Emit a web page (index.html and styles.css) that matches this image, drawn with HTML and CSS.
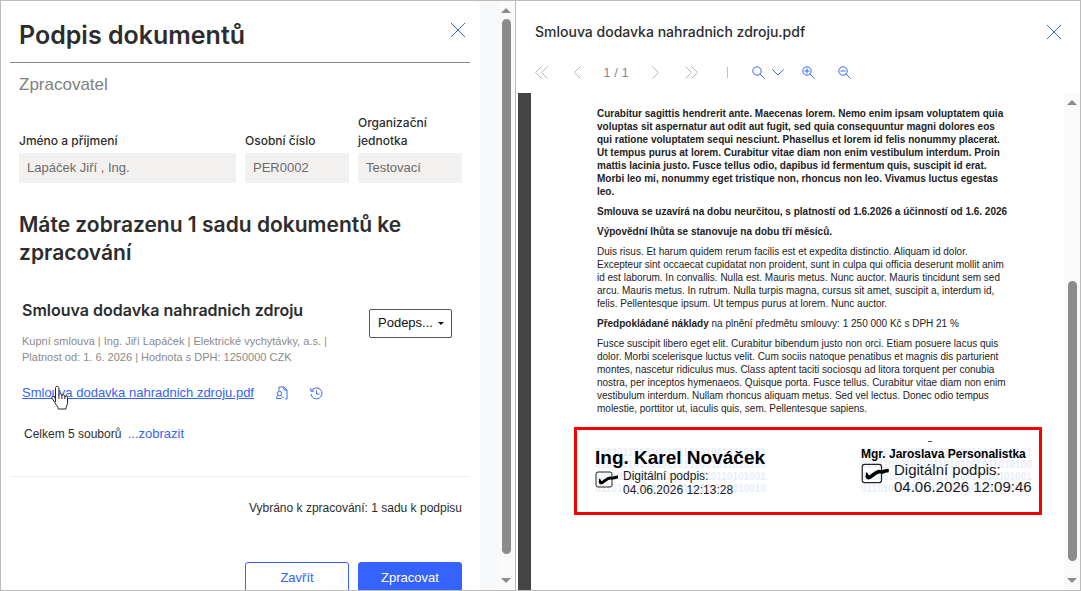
FILE: index.html
```html
<!DOCTYPE html>
<html lang="cs">
<head>
  <meta charset="UTF-8">
  <meta name="viewport" content="width=device-width, initial-scale=1.0">
  <title>Podpis dokumentů</title>
  <link rel="stylesheet" href="styles.css">
</head>
<body>
  <main class="app">
    <section class="left-pane">
      <div class="panel">
        <header class="panel-header">
          <h1>Podpis dokumentů</h1>
          <button class="close-btn" type="button" aria-label="Zavřít panel">
            <svg width="16" height="16" viewBox="0 0 16 16"><path d="M1 1l14 14M15 1L1 15"/></svg>
          </button>
        </header>

        <form class="panel-body">
          <p class="role">Zpracovatel</p>
          <div class="fields">
            <div class="field">
              <label for="name">Jméno a příjmení</label>
              <input id="name" type="text" value="Lapáček Jiří , Ing." readonly>
            </div>
            <div class="field">
              <label for="number">Osobní číslo</label>
              <input id="number" type="text" value="PER0002" readonly>
            </div>
            <div class="field">
              <label for="unit">Organizační jednotka</label>
              <input id="unit" type="text" value="Testovací" readonly>
            </div>
          </div>

          <h2>Máte zobrazenu 1 sadu dokumentů ke zpracování</h2>

          <div class="document-set">
            <div class="set-info">
              <h3>Smlouva dodavka nahradnich zdroju</h3>
              <p class="meta">Kupní smlouva | Ing. Jiří Lapáček | Elektrické vychytávky, a.s. |<br>Platnost od: 1. 6. 2026 | Hodnota s DPH: 1250000 CZK</p>
            </div>
            <div class="action-select">
              <select aria-label="Akce">
                <option>Podeps...</option>
              </select>
            </div>
          </div>

          <div class="file-row">
            <a class="file-link" href="#">Smlouva dodavka nahradnich zdroju.pdf</a>
            <svg class="cursor" width="20" height="26" viewBox="0 0 20 26"><path d="M5.5 17V3.2c0-2.6 3.4-2.6 3.4 0V10c0-1.8 3-1.7 3 .2v.6c.2-1.6 2.9-1.4 2.9.5v.7c.3-1.4 2.7-1.2 2.7.6v5.6c0 2-1.6 3.4-1.6 5.8H8.3c0-2.2-2.3-4.2-3.5-6.4L2 13.2c-.8-1.7 1-2.7 2.2-1.3l1.3 1.7M8.9 10v4M11.9 10.6V14M14.8 11.8V14"/></svg>
            <button class="icon-btn" type="button" aria-label="Detail souboru">
              <svg width="12" height="14" viewBox="0 0 12 14"><path d="M3 4.500V1h5l3 3v9H9.500M8 1v3h3"/><circle cx="3.500" cy="7.500" r="2.200"/><path d="M.5 12.500v-1c0-1 .7-1.700 1.700-1.700M.5 12.500H5.500M5 9.500l3 3"/></svg>
            </button>
            <button class="icon-btn" type="button" aria-label="Historie">
              <svg width="13" height="13" viewBox="0 0 13 13"><path d="M1.500 4A5.500 5.500 0 1 1 1 7M.8 1v3.200H4M6.500 3.500V7H9.500"/></svg>
            </button>
          </div>

          <p class="total">Celkem 5 souborů <a href="#">...zobrazit</a></p>

          <footer class="panel-footer">
            <p class="selected">Vybráno k zpracování: 1 sadu k podpisu</p>
            <div class="buttons">
              <button class="btn" type="button">Zavřít</button>
              <button class="btn btn-primary" type="button">Zpracovat</button>
            </div>
          </footer>
        </form>
      </div>
      <div class="scrollbar">
        <span class="arrow arrow-up"></span>
        <span class="thumb"></span>
        <span class="arrow arrow-down"></span>
      </div>
    </section>

    <section class="right-pane">
      <header class="viewer-header">
        <h4>Smlouva dodavka nahradnich zdroju.pdf</h4>
        <button class="close-btn" type="button" aria-label="Zavřít náhled">
          <svg width="16" height="16" viewBox="0 0 16 16"><path d="M1 1l14 14M15 1L1 15"/></svg>
        </button>
      </header>

      <nav class="toolbar">
        <button class="tool disabled" type="button" aria-label="První strana">
          <svg width="13" height="13" viewBox="0 0 13 13"><path d="M6.500 .5l-6 6 6 6M12.500 .5l-6 6 6 6"/></svg>
        </button>
        <button class="tool disabled" type="button" aria-label="Předchozí strana">
          <svg width="7" height="13" viewBox="0 0 7 13"><path d="M6.500 .5l-6 6 6 6"/></svg>
        </button>
        <span class="page-count">1 / 1</span>
        <button class="tool disabled" type="button" aria-label="Další strana">
          <svg width="7" height="13" viewBox="0 0 7 13"><path d="M.5 .5l6 6-6 6"/></svg>
        </button>
        <button class="tool disabled" type="button" aria-label="Poslední strana">
          <svg width="13" height="13" viewBox="0 0 13 13"><path d="M.5 .5l6 6-6 6M6.500 .5l6 6-6 6"/></svg>
        </button>
        <span class="separator"></span>
        <button class="tool tool-wide" type="button" aria-label="Hledat">
          <svg width="13" height="13" viewBox="0 0 13 13"><circle cx="5" cy="5" r="4.200"/><path d="M8 8l4.500 4.500"/></svg>
          <svg width="12" height="7" viewBox="0 0 12 7"><path d="M.5 .5L6 6 11.500 .5"/></svg>
        </button>
        <button class="tool" type="button" aria-label="Přiblížit">
          <svg width="13" height="13" viewBox="0 0 13 13"><circle cx="5" cy="5" r="4.200"/><path d="M8 8l4.500 4.500M2.500 5h5M5 2.500v5"/></svg>
        </button>
        <button class="tool" type="button" aria-label="Oddálit">
          <svg width="13" height="13" viewBox="0 0 13 13"><circle cx="5" cy="5" r="4.200"/><path d="M8 8l4.500 4.500M2.500 5h5"/></svg>
        </button>
      </nav>

      <div class="viewer">
        <article class="page">
          <p class="strong">Curabitur sagittis hendrerit ante. Maecenas lorem. Nemo enim ipsam voluptatem quia<br>
            voluptas sit aspernatur aut odit aut fugit, sed quia consequuntur magni dolores eos<br>
            qui ratione voluptatem sequi nesciunt. Phasellus et lorem id felis nonummy placerat.<br>
            Ut tempus purus at lorem. Curabitur vitae diam non enim vestibulum interdum. Proin<br>
            mattis lacinia justo. Fusce tellus odio, dapibus id fermentum quis, suscipit id erat.<br>
            Morbi leo mi, nonummy eget tristique non, rhoncus non leo. Vivamus luctus egestas<br>
            leo.</p>
          <p class="strong">Smlouva se uzavírá na dobu neurčitou, s platností od 1.6.2026 a účinností od 1.6. 2026</p>
          <p class="strong">Výpovědní lhůta se stanovuje na dobu tří měsíců.</p>
          <p>Duis risus. Et harum quidem rerum facilis est et expedita distinctio. Aliquam id dolor.<br>
            Excepteur sint occaecat cupidatat non proident, sunt in culpa qui officia deserunt mollit anim<br>
            id est laborum. In convallis. Nulla est. Mauris metus. Nunc auctor. Mauris tincidunt sem sed<br>
            arcu. Mauris metus. In rutrum. Nulla turpis magna, cursus sit amet, suscipit a, interdum id,<br>
            felis. Pellentesque ipsum. Ut tempus purus at lorem. Nunc auctor.</p>
          <p><b>Předpokládané náklady</b> na plnění předmětu smlouvy: 1 250 000 Kč s DPH 21 %</p>
          <p>Fusce suscipit libero eget elit. Curabitur bibendum justo non orci. Etiam posuere lacus quis<br>
            dolor. Morbi scelerisque luctus velit. Cum sociis natoque penatibus et magnis dis parturient<br>
            montes, nascetur ridiculus mus. Class aptent taciti sociosqu ad litora torquent per conubia<br>
            nostra, per inceptos hymenaeos. Quisque porta. Fusce tellus. Curabitur vitae diam non enim<br>
            vestibulum interdum. Nullam rhoncus aliquam metus. Sed vel lectus. Donec odio tempus<br>
            molestie, porttitor ut, iaculis quis, sem. Pellentesque sapiens.</p>

          <div class="signatures">
            <div class="signature">
              <div class="bits" aria-hidden="true">1001011010100101101010010110101<br>0101101010010110101001011010100<br>1011010100101101010010110101001<br>0110101001011010100101101010010</div>
              <strong>Ing. Karel Nováček</strong>
              <div class="stamp">
                <svg width="24" height="19" viewBox="0 0 24 19"><rect x="1" y="2" width="16" height="15" rx="2"/><path class="tick" d="M4 10c1 0 1 3 2 3 3 0 6-6 10-5 2 1 3-1 7-1"/></svg>
                <span>Digitální podpis:<br>04.06.2026 12:13:28</span>
              </div>
            </div>
            <div class="signature signature-large">
              <div class="bits" aria-hidden="true">1001011010100101101010010110101<br>0101101010010110101001011010100<br>1011010100101101010010110101001<br>0110101001011010100101101010010</div>
              <i class="dash"></i>
              <strong>Mgr. Jaroslava Personalistka</strong>
              <div class="stamp">
                <svg width="29" height="23" viewBox="0 0 24 19"><rect x="1" y="2" width="16" height="15" rx="2"/><path class="tick" d="M4 10c1 0 1 3 2 3 3 0 6-6 10-5 2 1 3-1 7-1"/></svg>
                <span>Digitální podpis:<br>04.06.2026 12:09:46</span>
              </div>
            </div>
          </div>
        </article>
        <div class="scrollbar">
          <span class="arrow arrow-up"></span>
          <span class="thumb thumb-low"></span>
          <span class="arrow arrow-down"></span>
        </div>
      </div>
    </section>
  </main>
</body>
</html>
```
FILE: styles.css
```css
* {
  box-sizing: border-box;
}
body {
  margin: 0;
  font-family: "Liberation Sans", sans-serif;
  font-size: 12px;
  color: #2d2d2d;
  background-color: #fff;
}
h1, h2, h3, h4, p {
  margin: 0;
}
h1, h2, h3, h4, label {
  font-family: Inter, "Liberation Sans", sans-serif;
}
h1, h2, h3 {
  font-weight: 600;
}
button, input, select {
  font: inherit;
}
svg {
  display: block;
  flex: none;
  fill: none;
  stroke: #3b66f5;
}
a {
  color: #3463f5;
}
.app {
  display: grid;
  grid-template-columns: minmax(0, 515fr) minmax(0, 564fr);
  height: 100vh;
  border: 1px solid #bcbcbc;
  overflow: hidden;
}

/* left pane */
.left-pane {
  display: flex;
  min-height: 0;
  padding-right: 1px;
  border-right: 1px solid #bcbcbc;
  background-color: #f7f8fa;
  overflow: hidden;
}
.panel {
  flex: 1;
  min-width: 0;
  margin-right: 18px;
  padding: 0 10px 0 9px;
  background-color: #fff;
  border-top-right-radius: 8px;
}
.panel-header {
  display: flex;
  justify-content: space-between;
  height: 62px;
  padding: 18px 4px 0 9px;
  border-bottom: 1px solid #8a8a8a;
}
h1 {
  font-size: 25px;
  line-height: 32px;
}
.close-btn {
  width: 16px;
  height: 16px;
  padding: 0;
  border: none;
  background: none;
  cursor: pointer;
}
.panel-header .close-btn {
  margin-top: 3px;
}
.role {
  padding: 12px 9px 0;
  font-size: 17px;
  line-height: 20px;
  color: #808080;
}
.fields {
  display: grid;
  grid-template-columns: 217fr 104fr 104fr;
  gap: 9px;
  align-items: end;
  padding: 19px 8px 0 9px;
}
.field label {
  display: block;
  margin-bottom: 3px;
  font-weight: 500;
  line-height: 18px;
}
.field input {
  display: block;
  width: 100%;
  height: 30px;
  padding: 0 8px 2px;
  border: none;
  border-radius: 2px;
  background-color: #f2f1f0;
  font-size: 13px;
  color: #6b6b6b;
}
h2 {
  padding: 28px 9px 0;
  font-size: 21px;
  line-height: 28px;
}
.document-set {
  display: flex;
  justify-content: space-between;
  padding: 31px 18px 0 12px;
}
h3 {
  font-size: 16px;
  line-height: 24px;
}
.set-info {
  min-width: 0;
}
.meta {
  margin-top: 11px;
  font-size: 11px;
  line-height: 16px;
  color: #8a8a8a;
  white-space: nowrap;
}
.action-select {
  position: relative;
  flex: none;
  width: 83px;
  height: 29px;
  margin-top: 11px;
}
.action-select select {
  width: 100%;
  height: 100%;
  padding: 0 8px 2px;
  border: 1px solid #555;
  border-radius: 2px;
  background-color: #fff;
  color: #111;
  font-size: 13px;
  appearance: none;
}
.action-select::after {
  content: "";
  position: absolute;
  top: 13px;
  right: 8px;
  border: 3px solid transparent;
  border-top-color: #111;
  border-bottom: none;
}
.file-row {
  position: relative;
  display: flex;
  align-items: center;
  gap: 22px;
  margin-top: 18px;
  padding-left: 12px;
  font-size: 13px;
  line-height: 20px;
}
.cursor {
  position: absolute;
  top: 2px;
  left: 40px;
  fill: #fff;
  stroke: #222;
}
.icon-btn {
  padding: 0;
  border: none;
  background: none;
}
.total {
  margin-top: 21px;
  padding-left: 14px;
  line-height: 20px;
}
.total a {
  margin-left: 3px;
  font-size: 13px;
  text-decoration: none;
}
.panel-footer {
  margin-top: 32px;
  padding: 21px 8px 0;
  border-top: 1px solid #efefef;
}
.selected {
  text-align: right;
  line-height: 20px;
}
.buttons {
  display: flex;
  justify-content: flex-end;
  gap: 9px;
  margin-top: 44px;
}
.btn {
  width: 104px;
  height: 30px;
  padding: 0;
  border: 1px solid #3463ff;
  border-radius: 3px;
  background-color: #fff;
  color: #3463ff;
  font-size: 13px;
}
.btn-primary {
  background-color: #3463ff;
  color: #fff;
}

/* scrollbars */
.scrollbar {
  display: flex;
  flex: none;
  flex-direction: column;
  align-items: center;
  width: 16px;
  padding: 7px 0;
  background-color: #fafafa;
}
.thumb {
  flex: 1;
  width: 9px;
  margin: 6px 0 24px;
  border-radius: 5px;
  background-color: #8b8b8b;
}
.thumb-low {
  flex: 0 0 58%;
  margin: auto 0 17px;
}
.arrow {
  border: 5px solid transparent;
}
.arrow-up {
  border-top: none;
  border-bottom-color: #8b8b8b;
}
.arrow-down {
  border-bottom: none;
  border-top-color: #8b8b8b;
}

/* document viewer */
.right-pane {
  display: flex;
  flex-direction: column;
  min-height: 0;
}
.viewer-header {
  display: flex;
  align-items: center;
  justify-content: space-between;
  padding: 21px 18px 0 19px;
}
h4 {
  font-size: 14px;
  font-weight: 500;
  line-height: 20px;
}
.toolbar {
  display: flex;
  align-items: center;
  height: 36px;
  margin-top: 12px;
  padding-left: 7px;
}
.tool {
  display: flex;
  align-items: center;
  justify-content: center;
  gap: 7px;
  width: 36px;
  height: 36px;
  padding: 0;
  border: none;
  background: none;
}
.tool-wide {
  width: 45px;
}
.disabled svg {
  stroke: #b8b8b8;
}
.page-count {
  width: 42px;
  text-align: center;
  font-size: 13px;
  color: #8a8a8a;
}
.separator {
  width: 1px;
  height: 11px;
  margin: 0 17px 0 18px;
  background-color: #c8c4a8;
}
.viewer {
  display: flex;
  flex: 1;
  min-height: 0;
  margin: 3px 0 0 2px;
  border-left: 13px solid #444;
}
.page {
  flex: 1;
  min-width: 0;
  padding: 14px 22px 0 66px;
  font-size: 10px;
  line-height: 13px;
  color: #222;
  white-space: nowrap;
  overflow: hidden;
}
.page p {
  margin-bottom: 7px;
}
.strong {
  font-weight: bold;
}
.signatures {
  display: flex;
  justify-content: space-between;
  height: 88px;
  margin: 12px 0 0 -23px;
  padding: 17px 5px 0 18px;
  border: 3px solid #f60000;
}
.signature {
  position: relative;
  width: 174px;
  height: 48px;
  color: #1a1a1a;
}
.bits {
  position: absolute;
  top: 0;
  left: 0;
  font-size: 10px;
  font-weight: bold;
  line-height: 12px;
  color: #e8eefa;
}
.signature strong {
  position: relative;
  display: block;
  font-size: 19px;
  line-height: 22px;
  color: #000;
}
.stamp {
  position: relative;
  display: flex;
  gap: 4px;
  font-size: 12px;
  line-height: 14px;
}
.stamp svg {
  margin-top: 1px;
  stroke: #222;
}
.stamp .tick {
  stroke: #000;
  stroke-width: 3;
}
.signature-large {
  width: 173px;
}
.signature-large strong {
  font-size: 12px;
  line-height: 14px;
}
.signature-large .stamp {
  font-size: 15px;
  line-height: 17px;
}
.dash {
  position: absolute;
  top: -6px;
  left: 67px;
  width: 4px;
  height: 1px;
  background-color: #555;
}
```
